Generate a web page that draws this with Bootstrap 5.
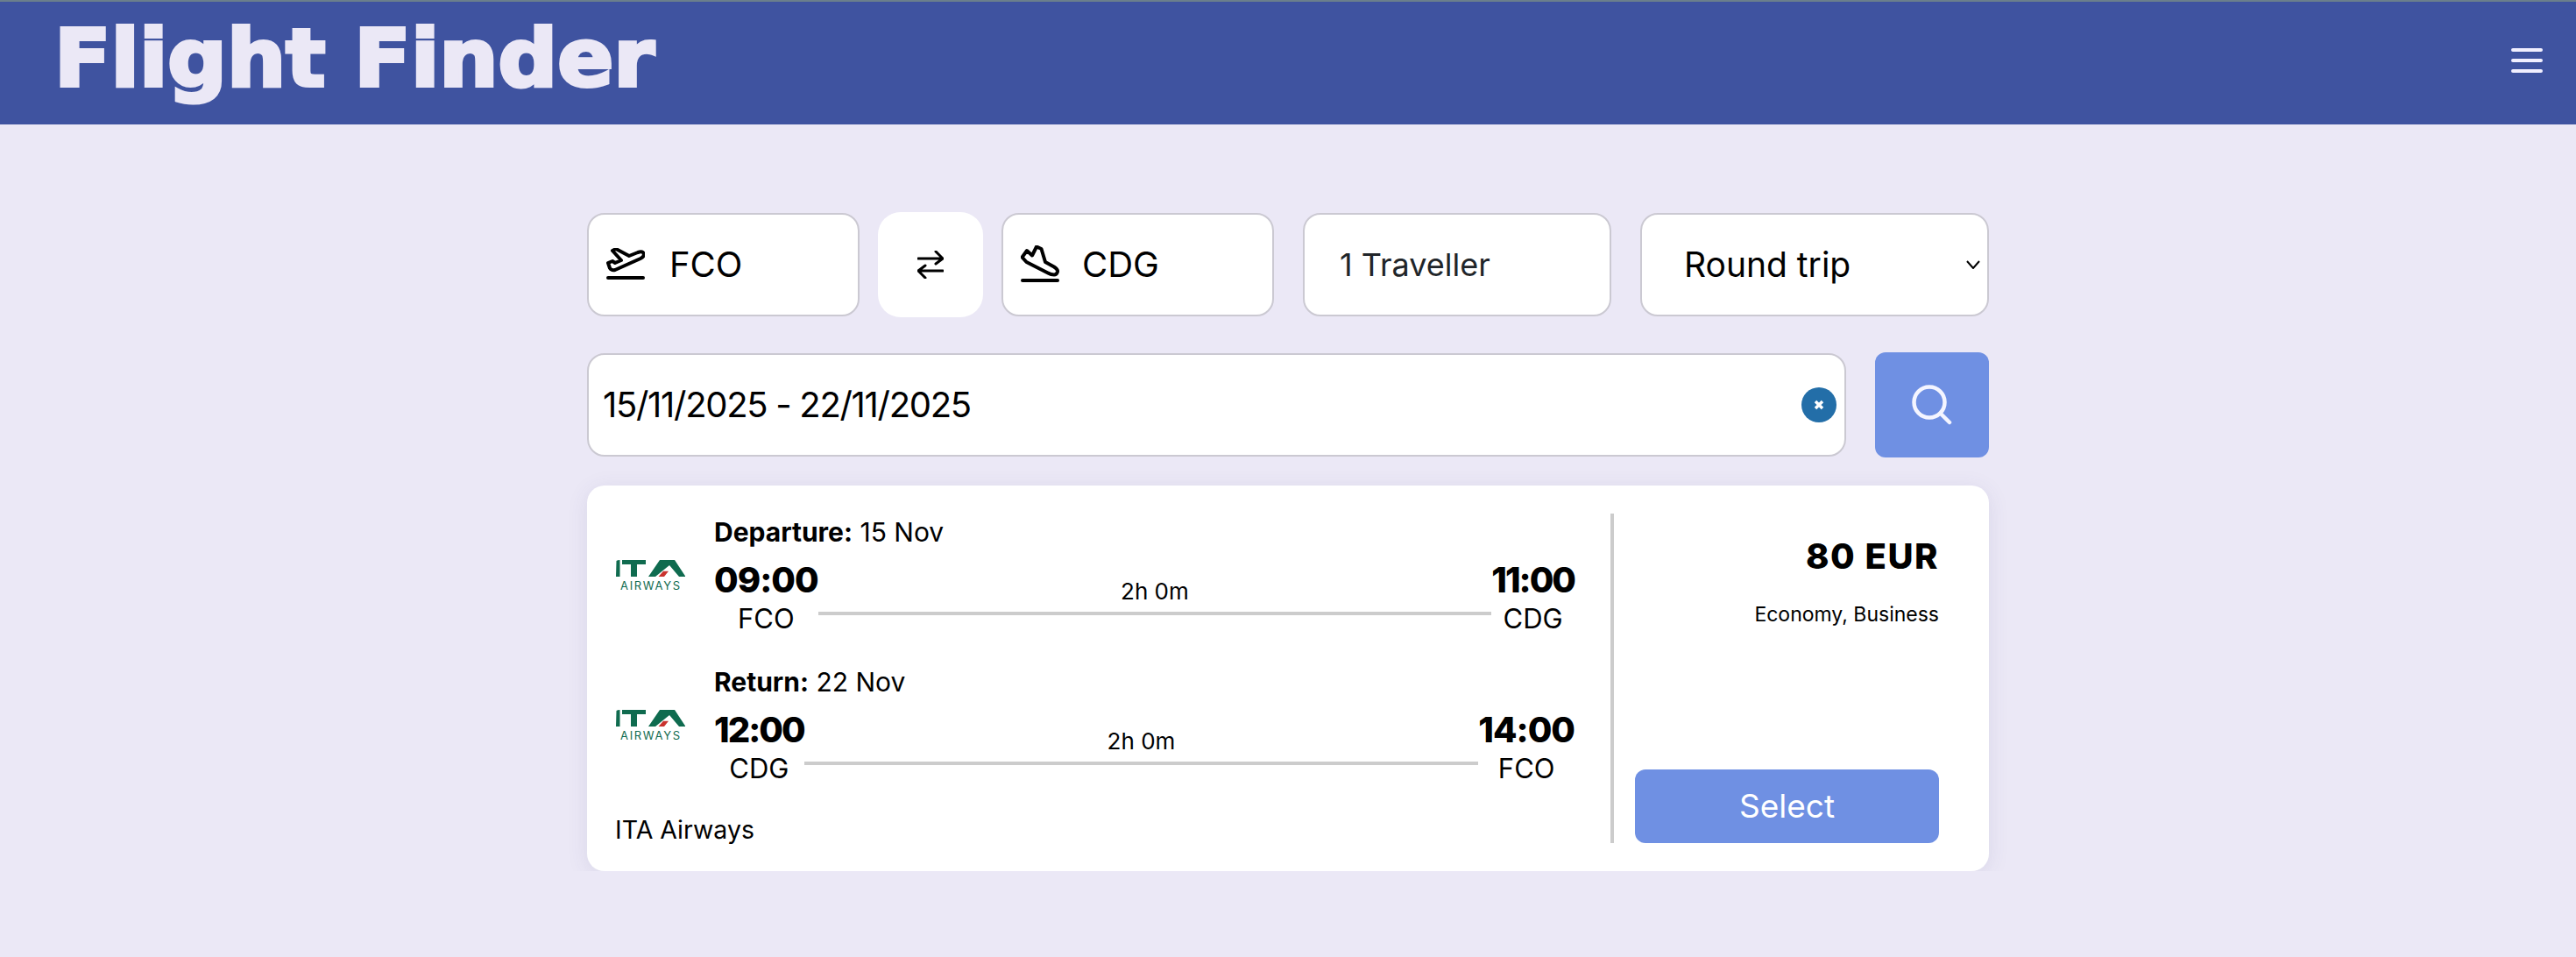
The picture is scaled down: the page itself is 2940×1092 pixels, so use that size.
<!DOCTYPE html>
<html lang="en">
<head>
    <meta charset="UTF-8">
    <meta name="viewport" content="width=device-width, initial-scale=1.0">
    <title>Flight Finder</title>
    <link rel="stylesheet" href="https://cdn.jsdelivr.net/npm/bootstrap@5.3.3/dist/css/bootstrap.min.css">
    <style>
        body {
            background: #ebe8f6;
            font-family: Inter, "Open Sans", sans-serif;
            color: #000;
        }
        .top-bar {
            height: 142px;
            background: #3f53a0;
            border-top: 2px solid #6b7f8c;
            padding: 0 38px 0 62px;
        }
        .brand-text {
            font-family: "DejaVu Sans", sans-serif;
            font-weight: 700;
            font-size: 90px;
            line-height: 1;
            color: #ebe8f6;
            -webkit-text-stroke: 4px #ebe8f6;
            display: inline-block;
            transform: scaleX(1.05);
            transform-origin: left center;
            white-space: nowrap;
            margin-bottom: 10px;
        }
        .burger {
            width: 36px;
            display: flex;
            flex-direction: column;
            gap: 8px;
            background: none;
            border: 0;
            padding: 0;
            margin-bottom: 6px;
        }
        .burger span {
            height: 4px;
            border-radius: 2px;
            background: #f1efff;
        }
        .page-wrap { width: 1600px; margin: 0 auto; padding-top: 100px; }
        .field {
            height: 118px;
            background: #fff;
            border: 2px solid #cbc9d2;
            border-radius: 20px;
            font-size: 40px;
            display: flex;
            align-items: center;
        }
        .field-from { width: 311px; padding-left: 20px; }
        .field-from svg { margin-right: 28px; }
        .field-to { width: 311px; padding-left: 20px; margin-left: 21px; }
        .field-to svg { margin-right: 26px; }
        .field-people { width: 352px; padding-left: 40px; margin-left: 33px; font-size: 36px; color: #212529; }
        .field-trip { width: 398px; padding: 0 8px 0 48px; margin-left: 33px; font-size: 39px; justify-content: space-between; }
        .field-date { padding: 0 9px 0 16px; justify-content: space-between; letter-spacing: -1.3px; }
        .swap-btn {
            width: 120px;
            height: 120px;
            margin-left: 21px;
            background: #fff;
            border: 0;
            border-radius: 26px;
        }
        .search-row { margin-top: 40px; gap: 33px; }
        .search-btn {
            width: 130px;
            height: 120px;
            background: #6f90e3;
            border: 0;
            border-radius: 12px;
        }
        .clear-dot {
            width: 40px;
            height: 40px;
            border-radius: 50%;
            background: #236ea8;
            display: flex;
            align-items: center;
            justify-content: center;
        }
        .result-card {
            margin-top: 32px;
            background: #fff;
            border: 0;
            border-radius: 20px;
            padding: 32px 57px 32px 32px;
            box-shadow: 0 4px 24px rgba(70, 70, 120, .1);
        }
        .legs { width: 1095px; flex: none; }
        .leg { height: 142px; }
        .leg + .leg { margin-top: 29px; }
        .leg-logo { width: 80px; margin: 53px 33px 0 0; flex: none; }
        .leg-title { font-size: 30px; line-height: 42px; margin-bottom: 12px; white-space: nowrap; }
        .leg-title b { font-weight: 700; }
        .time-col { text-align: center; flex: none; }
        .time-big { font-size: 40px; line-height: 44px; font-weight: 800; letter-spacing: -1px; }
        .time-tight { letter-spacing: -2px; }
        .time-code { font-size: 31px; line-height: 44px; }
        .line-wrap { padding-top: 18px; text-align: center; }
        .line-label { font-size: 26px; line-height: 34px; margin-bottom: 6px; }
        .line-bar { height: 4px; background: #cccccc; }
        .airline-name { font-size: 28.5px; line-height: 30px; margin-top: 33px; }
        .split { width: 4px; background: #cccccc; margin: 0 24px 0 41px; flex: none; }
        .price-col { width: 347px; }
        .price-val { font-size: 40px; line-height: 48px; font-weight: 800; letter-spacing: 1.5px; margin-top: 25px; }
        .price-class { font-size: 23px; line-height: 32px; margin-top: 26px; }
        .select-btn {
            height: 84px;
            background: #6f90e3;
            border: 0;
            color: #fff;
            font-size: 37px;
            border-radius: 12px;
        }
        .select-btn:hover { background: #6f90e3; color: #fff; }
    </style>
</head>
<body>
    <nav class="top-bar d-flex align-items-center justify-content-between">
        <span class="brand-text">Flight Finder</span>
        <button class="burger" type="button" aria-label="Menu"><span></span><span></span><span></span></button>
    </nav>

    <main class="page-wrap">
        <div class="d-flex align-items-center">
            <div class="field field-from">
                <svg width="44" height="38" viewBox="0 0 44 38" fill="none" stroke="#000" stroke-width="4" stroke-linejoin="round" stroke-linecap="round">
                    <path d="M7 3l4-2 15 8 10-4q6-2 7 2 0 3-4 5L10 25q-4 1-6-2L2 17l5-2 3 2 7-3z"/>
                    <path d="M2 34h40"/>
                </svg>
                <span>FCO</span>
            </div>
            <button class="swap-btn" type="button" aria-label="Swap">
                <svg width="30" height="32" viewBox="0 0 30 32" fill="none" stroke="#000" stroke-width="3" stroke-linecap="round" stroke-linejoin="round">
                    <path d="M1 9h28M21 1l8 8-8 6"/>
                    <path d="M29 23H1M9 17l-8 6 8 8"/>
                </svg>
            </button>
            <div class="field field-to">
                <svg width="44" height="44" viewBox="0 0 44 44" fill="none" stroke="#000" stroke-width="4" stroke-linejoin="round" stroke-linecap="round">
                    <path d="M1.5 13.5L7 6l6 5.5L18 1.500 23.500 4 28 19l10 5.500q4.500 3 4 5.500-1 3.500-4 3.500-3.500 0-7-2L6.500 19z"/>
                    <path d="M2 40h40"/>
                </svg>
                <span>CDG</span>
            </div>
            <div class="field field-people">1 Traveller</div>
            <div class="field field-trip">
                <span>Round trip</span>
                <svg width="16" height="10" viewBox="0 0 16 10" fill="none" stroke="#000" stroke-width="2"><path d="M1 1l7 8 7-8"/></svg>
            </div>
        </div>

        <div class="d-flex align-items-center search-row">
            <div class="field field-date flex-grow-1">
                <span>15/11/2025 - 22/11/2025</span>
                <span class="clear-dot">
                    <svg width="12" height="12" viewBox="0 0 12 12" stroke="#fff" stroke-width="3.500"><path d="M2 2l8 8M10 2l-8 8"/></svg>
                </span>
            </div>
            <button class="search-btn" type="button" aria-label="Search">
                <svg width="46" height="46" viewBox="0 0 46 46" fill="none" stroke="#f4f5ff" stroke-width="4.500" stroke-linecap="round"><circle cx="20" cy="20" r="17.500"/><path d="M33 33l10 10"/></svg>
            </button>
        </div>

        <div class="card result-card flex-row">
            <div class="legs">
                <div class="leg d-flex">
                    <svg class="leg-logo" height="40" viewBox="0 0 80 40">
                        <path fill="#0f6b4f" d="M1.500 1q1-1 4-1v19H1zM8 0h27v5H25v14h-7V5H8z"/>
                        <path fill="#0f6b4f" d="M38 19L51 0h17l12.500 19H73L62 6 46 19z"/>
                        <path fill="#c9332f" d="M49.500 19l5.500-6.300h6L56 19z"/>
                        <text x="6" y="33.500" font-family="Inter, sans-serif" font-size="13" textLength="68" fill="#0f6b4f">AIRWAYS</text>
                    </svg>
                    <div class="flex-grow-1">
                        <div class="leg-title"><b>Departure:</b> 15 Nov</div>
                        <div class="d-flex">
                            <div class="time-col"><div class="time-big">09:00</div><div class="time-code">FCO</div></div>
                            <div class="line-wrap flex-grow-1"><div class="line-label">2h 0m</div><div class="line-bar"></div></div>
                            <div class="time-col"><div class="time-big time-tight">11:00</div><div class="time-code">CDG</div></div>
                        </div>
                    </div>
                </div>
                <div class="leg d-flex">
                    <svg class="leg-logo" height="40" viewBox="0 0 80 40">
                        <path fill="#0f6b4f" d="M1.500 1q1-1 4-1v19H1zM8 0h27v5H25v14h-7V5H8z"/>
                        <path fill="#0f6b4f" d="M38 19L51 0h17l12.500 19H73L62 6 46 19z"/>
                        <path fill="#c9332f" d="M49.500 19l5.500-6.300h6L56 19z"/>
                        <text x="6" y="33.500" font-family="Inter, sans-serif" font-size="13" textLength="68" fill="#0f6b4f">AIRWAYS</text>
                    </svg>
                    <div class="flex-grow-1">
                        <div class="leg-title"><b>Return:</b> 22 Nov</div>
                        <div class="d-flex">
                            <div class="time-col"><div class="time-big time-tight">12:00</div><div class="time-code">CDG</div></div>
                            <div class="line-wrap flex-grow-1"><div class="line-label">2h 0m</div><div class="line-bar"></div></div>
                            <div class="time-col"><div class="time-big">14:00</div><div class="time-code">FCO</div></div>
                        </div>
                    </div>
                </div>
                <div class="airline-name">ITA Airways</div>
            </div>
            <div class="split"></div>
            <div class="price-col d-flex flex-column text-end">
                <div class="price-val">80 EUR</div>
                <div class="price-class">Economy, Business</div>
                <button class="btn select-btn mt-auto w-100" type="button">Select</button>
            </div>
        </div>
    </main>

    <script src="https://cdn.jsdelivr.net/npm/bootstrap@5.3.3/dist/js/bootstrap.bundle.min.js"></script>
</body>
</html>
